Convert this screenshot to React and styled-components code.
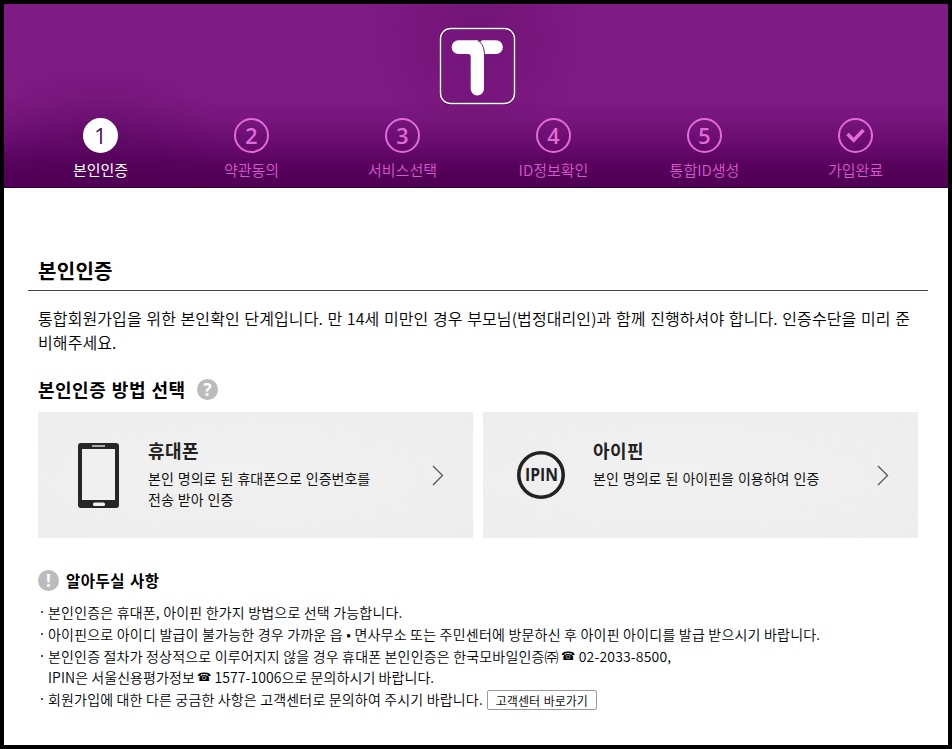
import React from 'react';
import styled, { createGlobalStyle } from 'styled-components';

const Global = createGlobalStyle`
  * { box-sizing: border-box; }
  body {
    margin: 0;
    background: #fff;
    color: #000;
    font-family: 'Noto Sans CJK KR', 'Noto Sans', sans-serif;
  }
  h1, h2, h3, p, ul, ol { margin: 0; padding: 0; }
  ul, ol { list-style: none; }
  svg { display: block; }
`;

const Page = styled.div`
  width: 952px;
  height: 749px;
  border: 4px solid #000;
  background: #fff;
  overflow: hidden;
`;

const Header = styled.header`
  height: 184px;
  padding-top: 23px;
  border-bottom: 1px solid #2f0033;
  background:
    radial-gradient(ellipse 130px 90px at 96px 150px, rgba(75, 0, 82, 0.38), rgba(75, 0, 82, 0) 100%),
    radial-gradient(ellipse 110px 110px at 473px 30px, rgba(95, 10, 100, 0.42), rgba(95, 10, 100, 0) 100%),
    linear-gradient(#801a84 0, #7f1a83 52%, #77167c 63%, #690c6f 76%, #57035d 88%, #500056 95%, #500056 100%);
`;

const Logo = styled.div`
  display: flex;
  justify-content: center;
  padding-left: 3px;
  height: 91px;
`;

const Steps = styled.ol`
  display: grid;
  grid-template-columns: repeat(6, 151px);
  padding-left: 21px;
`;

const Step = styled.li`
  display: flex;
  flex-direction: column;
  align-items: center;
  color: ${(p) => (p.$active ? '#fff' : '#d957ce')};
`;

const StepBadge = styled.span`
  display: flex;
  align-items: center;
  justify-content: center;
  width: 35px;
  height: 35px;
  border: 2px solid ${(p) => (p.$active ? '#fff' : '#e26bd9')};
  border-radius: 50%;
  background: ${(p) => (p.$active ? '#fff' : 'transparent')};
  color: ${(p) => (p.$active ? '#4b0a55' : '#e26bd9')};
  font: ${(p) => (p.$active ? 400 : 600)} 21.5px/31px 'Open Sans', sans-serif;
`;

const StepLabel = styled.span`
  margin-top: 6px;
  font-size: 15px;
  line-height: 22px;
  font-weight: ${(p) => (p.$active ? 400 : 350)};
  white-space: nowrap;
`;

const Content = styled.main`
  padding: 67px 20px 0 24px;
`;

const Title = styled.h1`
  height: 36px;
  padding-left: 10px;
  border-bottom: 1px solid #444;
  font-size: 20px;
  line-height: 31px;
  font-weight: 700;
  letter-spacing: 0.3px;
  color: #000;
`;

const Intro = styled.p`
  padding: 15px 0 0 10px;
  font-size: 16px;
  line-height: 24px;
  font-weight: 350;
  letter-spacing: 0.1px;
  word-spacing: 0.9px;
  white-space: nowrap;
`;

const SectionHead = styled.div`
  display: flex;
  align-items: center;
  gap: ${(p) => p.$gap}px;
  padding-left: 10px;
  margin-top: ${(p) => p.$top}px;
`;

const SectionTitle = styled.h2`
  font-size: ${(p) => p.$size}px;
  line-height: 26px;
  font-weight: 700;
  letter-spacing: 0.5px;
  word-spacing: 1px;
  color: #000;
  white-space: nowrap;
`;

const Cards = styled.div`
  display: grid;
  grid-template-columns: 435px 435px;
  gap: 10px;
  margin: 10px 0 0 10px;
`;

const Card = styled.button`
  display: flex;
  height: 126px;
  padding: 0;
  border: 0;
  background: radial-gradient(ellipse at 45% 50%, #f1f1f1, #ededed);
  font: inherit;
  color: #111;
  text-align: left;
`;

const CardIcon = styled.span`
  flex: none;
  width: 110px;
  padding: ${(p) => p.$pad};
`;

const CardText = styled.span`
  flex: 1;
  padding-top: 25px;
`;

const CardTitle = styled.strong`
  display: block;
  font-size: 18px;
  line-height: 26px;
  font-weight: 700;
  letter-spacing: 0.5px;
  color: #222;
`;

const CardDesc = styled.span`
  display: block;
  padding-top: 5px;
  font-size: 14px;
  line-height: 21px;
  font-weight: 400;
  word-spacing: 0.9px;
  white-space: nowrap;
`;

const CardArrow = styled.span`
  flex: none;
  width: 41px;
  padding-top: 53px;
`;

const Notes = styled.ul`
  padding: 9px 0 0 12px;
`;

const Note = styled.li`
  display: grid;
  grid-template-columns: 8px 1fr;
  font-size: 14px;
  line-height: 21.8px;
  font-weight: 350;
  white-space: nowrap;
`;

const Bullet = styled.span`
  align-self: start;
  width: 2px;
  height: 2px;
  margin: 9px 0 0 1px;
  background: #555;
`;

const NoteLine = styled.span`
  display: flex;
  align-items: center;
  letter-spacing: ${(p) => p.$ls || 0.19}px;
  white-space: pre;
`;

const Phone = styled.span`
  margin: 0 0 0 -1px;
  font-family: 'DejaVu Sans', sans-serif;
  font-size: 11.5px;
  font-weight: 400;
  letter-spacing: 0;
`;

const LinkButton = styled.button`
  width: 110px;
  height: 20px;
  margin-left: 4px;
  padding: 0;
  border: 1px solid #999;
  border-radius: 2px;
  background: #fff;
  font: 400 12px/17px 'Noto Sans CJK KR', sans-serif;
  letter-spacing: 0;
  word-spacing: 1px;
  color: #111;
`;

const steps = [
  ['1', '본인인증'],
  ['2', '약관동의'],
  ['3', '서비스선택'],
  ['4', 'ID정보확인'],
  ['5', '통합ID생성'],
  ['', '가입완료'],
];

const TLogo = () => (
  <svg width="77" height="78" viewBox="0 0 77 78">
    <rect x="1.5" y="1.5" width="74" height="75" rx="10" fill="#781680" stroke="#3c0042" strokeWidth="3" opacity=".5" />
    <rect x="1.5" y="1.5" width="74" height="75" rx="10" fill="none" stroke="#fff" strokeWidth="1.5" />
    <path d="M19.500 13.200H57A6.900 6.900 0 0 1 57 27H45V61.800A6.600 6.600 0 0 1 31.700 61.800V29.500Q31.700 27 29.200 27H19.500A6.900 6.900 0 0 1 19.500 13.200Z" fill="#fff" />
    <path d="M36 12.800Q39.500 12.900 41.200 15L43.500 12.800Z" fill="#781680" />
    <path d="M39 13.800C43.500 16.500 45.400 21 45.400 27.200" fill="none" stroke="#781680" strokeWidth="1" />
  </svg>
);

const CheckIcon = () => (
  <svg width="19" height="15" viewBox="0 0 19 15">
    <path d="M1.500 6L7.700 12.200L17.500 2" fill="none" stroke="#e26bd9" strokeWidth="3.600" />
  </svg>
);

const PhoneIcon = () => (
  <svg width="41" height="65" viewBox="0 0 41 65">
    <rect width="41" height="65" rx="3" fill="#262626" />
    <rect x="4" y="6" width="33" height="51" fill="#f0f0f0" />
    <rect x="14" y="2" width="13" height="2" fill="#aaa" />
    <rect x="15" y="59.500" width="12" height="3.500" rx="1.500" fill="#f0f0f0" />
  </svg>
);

const IpinIcon = () => (
  <svg width="48" height="48" viewBox="0 0 48 48">
    <circle cx="24" cy="24" r="22.200" fill="none" stroke="#222" strokeWidth="3.600" />
    <text x="24.500" y="30.200" textAnchor="middle" textLength="33" lengthAdjust="spacingAndGlyphs" fontFamily="Open Sans" fontWeight="700" fontSize="17" fill="#222">IPIN</text>
  </svg>
);

const Chevron = () => (
  <svg width="12" height="21" viewBox="0 0 12 21">
    <path d="M1 1L10.500 10.500L1 20" fill="none" stroke="#555" strokeWidth="1.300" />
  </svg>
);

const RoundMark = ({ mark }) => (
  <svg width="21" height="21" viewBox="0 0 21 21">
    <circle cx="10.500" cy="10.500" r="10.500" fill="#bbb" />
    <text x="10.500" y="16.500" textAnchor="middle" fontFamily="Open Sans" fontWeight="700" fontSize="17" fill="#fff">{mark}</text>
  </svg>
);

export default function App() {
  return (
    <>
      <Global />
      <Page>
        <Header>
          <Logo><TLogo /></Logo>
          <Steps>
            {steps.map(([number, label], i) => (
              <Step key={label} $active={i === 0}>
                <StepBadge $active={i === 0}>{number || <CheckIcon />}</StepBadge>
                <StepLabel $active={i === 0}>{label}</StepLabel>
              </Step>
            ))}
          </Steps>
        </Header>
        <Content>
          <Title>본인인증</Title>
          <Intro>
            통합회원가입을 위한 본인확인 단계입니다. 만 14세 미만인 경우 부모님(법정대리인)과 함께 진행하셔야 합니다. 인증수단을 미리 준
            <br />
            비해주세요.
          </Intro>
          <SectionHead $top={22} $gap={11}>
            <SectionTitle $size={18}>본인인증 방법 선택</SectionTitle>
            <RoundMark mark="?" />
          </SectionHead>
          <Cards>
            <Card>
              <CardIcon $pad="31px 0 0 40px"><PhoneIcon /></CardIcon>
              <CardText>
                <CardTitle>휴대폰</CardTitle>
                <CardDesc>본인 명의로 된 휴대폰으로 인증번호를<br />전송 받아 인증</CardDesc>
              </CardText>
              <CardArrow><Chevron /></CardArrow>
            </Card>
            <Card>
              <CardIcon $pad="39px 0 0 34px"><IpinIcon /></CardIcon>
              <CardText>
                <CardTitle>아이핀</CardTitle>
                <CardDesc>본인 명의로 된 아이핀을 이용하여 인증</CardDesc>
              </CardText>
              <CardArrow><Chevron /></CardArrow>
            </Card>
          </Cards>
          <SectionHead $top={29} $gap={7}>
            <RoundMark mark="!" />
            <SectionTitle $size={15.5}>알아두실 사항</SectionTitle>
          </SectionHead>
          <Notes>
            <Note><Bullet /><NoteLine>본인인증은 휴대폰, 아이핀 한가지 방법으로 선택 가능합니다.</NoteLine></Note>
            <Note><Bullet /><NoteLine $ls={0.21}>아이핀으로 아이디 발급이 불가능한 경우 가까운 읍 • 면사무소 또는 주민센터에 방문하신 후 아이핀 아이디를 발급 받으시기 바랍니다.</NoteLine></Note>
            <Note>
              <Bullet />
              <div>
                <NoteLine $ls={0.18}>본인인증 절차가 정상적으로 이루어지지 않을 경우 휴대폰 본인인증은 한국모바일인증㈜ <Phone>☎</Phone> 02-2033-8500,</NoteLine>
                <NoteLine $ls={0.07}>IPIN은 서울신용평가정보 <Phone>☎</Phone> 1577-1006으로 문의하시기 바랍니다.</NoteLine>
              </div>
            </Note>
            <Note>
              <Bullet />
              <NoteLine $ls={0.17}>회원가입에 대한 다른 궁금한 사항은 고객센터로 문의하여 주시기 바랍니다.<LinkButton>고객센터 바로가기</LinkButton></NoteLine>
            </Note>
          </Notes>
        </Content>
      </Page>
    </>
  );
}
